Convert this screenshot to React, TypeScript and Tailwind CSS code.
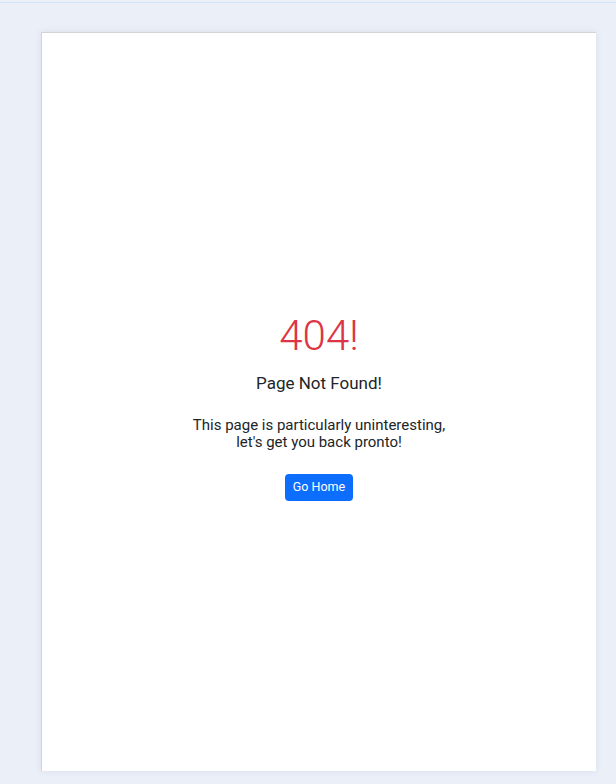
export default function App() {
    return (
        <div
            className="min-h-[784px] w-[616px] bg-[#ebeff8] pt-[2px]"
            style={{ fontFamily: 'Roboto, "Liberation Sans", sans-serif' }}
        >
            <div className="h-[1px] w-full bg-[#d3e2fb]" />
            <div className="pl-[41px] pr-[20px] pt-[29px]">
                <div className="flex h-[739px] flex-col items-center justify-center border-l border-t border-[#d4d4d4] bg-white pt-[8px] shadow-[0_0_6px_rgba(180,190,210,0.35)]">
                    <h1 className="text-[42px] font-light leading-[48px] text-[#dc3545]">404!</h1>
                    <h2 className="mt-[12px] text-[17px] leading-[22px] text-[#212529]">Page Not Found!</h2>
                    <p className="mt-[23px] text-center text-[15px] leading-[17px] text-[#212529]">
                        This page is particularly uninteresting,
                        <br />
                        let's get you back pronto!
                    </p>
                    <button
                        type="button"
                        className="mt-[23px] h-[27px] rounded-[4px] bg-[#0d6efd] px-[8px] text-[12.5px] text-white"
                    >
                        Go Home
                    </button>
                </div>
            </div>
        </div>
    )
}
